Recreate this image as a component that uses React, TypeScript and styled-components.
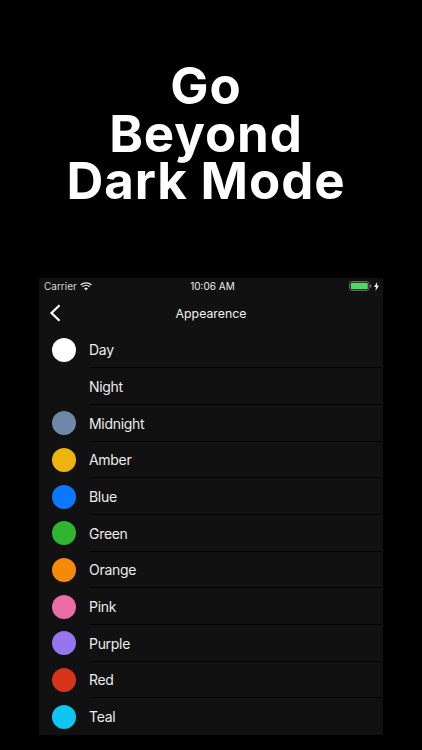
import React from "react";
import styled, { createGlobalStyle } from "styled-components";

const Global = createGlobalStyle`
  html, body { margin: 0; padding: 0; background: #000; }
  body { width: 422px; height: 750px; overflow: hidden; }
`;

const Page = styled.main`
  width: 422px;
  height: 750px;
  background: #000;
  display: flex;
  flex-direction: column;
  align-items: center;
  font-family: Inter, "Liberation Sans", sans-serif;
`;

const Headline = styled.h1`
  margin: 62px 0 0;
  width: 422px;
  height: 216px;
  padding-right: 10px;
  box-sizing: border-box;
  text-align: center;
  color: #fff;
  font-size: 51px;
  line-height: 47.5px;
  font-weight: 700;
  letter-spacing: 0.9px;
`;

const Panel = styled.section`
  width: 344px;
  height: 457px;
  background: #111111;
  color: #fff;
  display: flex;
  flex-direction: column;
`;

const StatusBar = styled.div`
  height: 17px;
  padding: 0 4px 0 5px;
  display: grid;
  grid-template-columns: 1fr auto 1fr;
  align-items: center;
  font-size: 10px;
`;

const Carrier = styled.div`
  display: flex;
  align-items: center;
  gap: 3px;
  color: #d8d8d8;
`;

const Clock = styled.div`
  font-weight: 400;
  color: #eee;
  margin-left: 2px;
`;

const Power = styled.div`
  display: flex;
  justify-content: flex-end;
  align-items: center;
  gap: 2px;
`;

const NavBar = styled.div`
  height: 37px;
  position: relative;
  display: flex;
  align-items: center;
  justify-content: center;
  font-size: 12.3px;
  color: #f2f2f2;
`;

const Back = styled.svg`
  position: absolute;
  left: 10px;
  top: 9px;
`;

const List = styled.div`
  flex: 1;
  display: flex;
  flex-direction: column;
`;

const Row = styled.div`
  height: 36.7px;
  display: flex;
  align-items: center;
`;

const Swatch = styled.span<{ $color: string }>`
  flex: none;
  width: 24px;
  height: 24px;
  margin: 0 13px;
  border-radius: 50%;
  background: ${(p) => p.$color};
`;

const Label = styled.div<{ $last: boolean }>`
  flex: 1;
  height: 100%;
  display: flex;
  align-items: center;
  box-sizing: border-box;
  font-size: 14px;
  letter-spacing: -0.3px;
  color: #ececec;
  box-shadow: ${(p) => (p.$last ? "none" : "inset 0 -1px 0 #030303")};
`;

const themes: [string, string][] = [
  ["Day", "#ffffff"],
  ["Night", "#111111"],
  ["Midnight", "#7088a8"],
  ["Amber", "#efb40c"],
  ["Blue", "#0a78ff"],
  ["Green", "#2fb52f"],
  ["Orange", "#f58a07"],
  ["Pink", "#ec6ca6"],
  ["Purple", "#9676ee"],
  ["Red", "#d6341a"],
  ["Teal", "#10c5f2"],
];

const Wifi = () => (
  <svg width="12" height="9" viewBox="0 0 12 9" fill="none">
    <path d="M.6 3A8 8 0 0 1 11.4 3" stroke="#e8e8e8" strokeWidth="1.3" />
    <path d="M2.4 4.8a5.3 5.3 0 0 1 7.2 0" stroke="#e8e8e8" strokeWidth="1.3" />
    <path d="M4 6.3a3 3 0 0 1 4 0L6 8.6Z" fill="#e8e8e8" />
  </svg>
);

const Battery = () => (
  <svg width="23" height="10" viewBox="0 0 23 10">
    <rect x=".5" y=".5" width="19.5" height="9" rx="2.2" fill="none" stroke="#666" />
    <rect x="1.8" y="1.8" width="17" height="6.4" rx="1" fill="#4cd964" />
    <rect x="21" y="3.5" width="1.3" height="3" rx=".6" fill="#777" />
  </svg>
);

const Bolt = () => (
  <svg width="5" height="9" viewBox="0 0 5 9">
    <path d="M3.2 0 0 5h2L1.5 9 5 3.6H3Z" fill="#eee" />
  </svg>
);

export default function App() {
  return (
    <Page>
      <Global />
      <Headline>
        Go
        <br />
        Beyond
        <br />
        Dark Mode
      </Headline>
      <Panel>
        <StatusBar>
          <Carrier>
            Carrier <Wifi />
          </Carrier>
          <Clock>10:06 AM</Clock>
          <Power>
            <Battery />
            <Bolt />
          </Power>
        </StatusBar>
        <NavBar>
          <Back width="12" height="18" viewBox="0 0 12 18" fill="none">
            <path d="M10.5 1.2 2.5 9l8 7.8" stroke="#fff" strokeWidth="2.2" />
          </Back>
          Appearence
        </NavBar>
        <List>
          {themes.map(([name, color], i) => (
            <Row key={name}>
              <Swatch $color={color} />
              <Label $last={i === themes.length - 1}>{name}</Label>
            </Row>
          ))}
        </List>
      </Panel>
    </Page>
  );
}
